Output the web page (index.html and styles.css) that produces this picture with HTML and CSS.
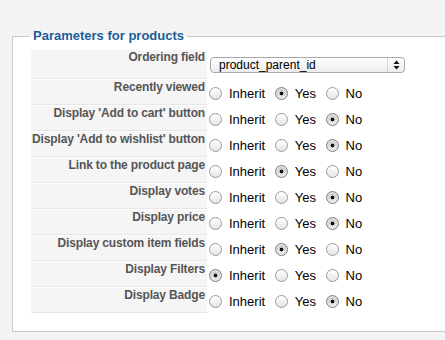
FILE: index.html
```html
<!DOCTYPE html>
<html lang="en">
<head>
  <meta charset="UTF-8">
  <title>Parameters for products</title>
  <link rel="stylesheet" href="styles.css">
</head>
<body>

  <fieldset class="adminform">
    <legend>Parameters for products</legend>
    <table class="paramlist">
      <tr>
        <td class="paramlist_key">Ordering field</td>
        <td class="paramlist_value first">
          <div class="select">
            <span class="select-text">product_parent_id</span>
            <span class="select-arrows">
              <svg width="7" height="10" viewBox="0 0 7 10">
                <path d="M3.5 0.5 L6.5 4 L0.5 4 Z" fill="#111"/>
                <path d="M3.5 9.5 L6.5 6 L0.5 6 Z" fill="#111"/>
              </svg>
            </span>
          </div>
        </td>
      </tr>
      <tr>
        <td class="paramlist_key">Recently viewed</td>
        <td class="paramlist_value">
          <input type="radio" name="p1"><label>Inherit</label>
          <input type="radio" name="p1" checked><label>Yes</label>
          <input type="radio" name="p1"><label>No</label>
        </td>
      </tr>
      <tr>
        <td class="paramlist_key">Display 'Add to cart' button</td>
        <td class="paramlist_value">
          <input type="radio" name="p2"><label>Inherit</label>
          <input type="radio" name="p2"><label>Yes</label>
          <input type="radio" name="p2" checked><label>No</label>
        </td>
      </tr>
      <tr>
        <td class="paramlist_key">Display 'Add to wishlist' button</td>
        <td class="paramlist_value">
          <input type="radio" name="p3"><label>Inherit</label>
          <input type="radio" name="p3"><label>Yes</label>
          <input type="radio" name="p3" checked><label>No</label>
        </td>
      </tr>
      <tr>
        <td class="paramlist_key">Link to the product page</td>
        <td class="paramlist_value">
          <input type="radio" name="p4"><label>Inherit</label>
          <input type="radio" name="p4" checked><label>Yes</label>
          <input type="radio" name="p4"><label>No</label>
        </td>
      </tr>
      <tr>
        <td class="paramlist_key">Display votes</td>
        <td class="paramlist_value">
          <input type="radio" name="p5"><label>Inherit</label>
          <input type="radio" name="p5"><label>Yes</label>
          <input type="radio" name="p5" checked><label>No</label>
        </td>
      </tr>
      <tr>
        <td class="paramlist_key">Display price</td>
        <td class="paramlist_value">
          <input type="radio" name="p6"><label>Inherit</label>
          <input type="radio" name="p6"><label>Yes</label>
          <input type="radio" name="p6" checked><label>No</label>
        </td>
      </tr>
      <tr>
        <td class="paramlist_key">Display custom item fields</td>
        <td class="paramlist_value">
          <input type="radio" name="p7"><label>Inherit</label>
          <input type="radio" name="p7" checked><label>Yes</label>
          <input type="radio" name="p7"><label>No</label>
        </td>
      </tr>
      <tr>
        <td class="paramlist_key">Display Filters</td>
        <td class="paramlist_value">
          <input type="radio" name="p8" checked><label>Inherit</label>
          <input type="radio" name="p8"><label>Yes</label>
          <input type="radio" name="p8"><label>No</label>
        </td>
      </tr>
      <tr>
        <td class="paramlist_key">Display Badge</td>
        <td class="paramlist_value">
          <input type="radio" name="p9"><label>Inherit</label>
          <input type="radio" name="p9"><label>Yes</label>
          <input type="radio" name="p9" checked><label>No</label>
        </td>
      </tr>
    </table>
  </fieldset>

</body>
</html>
```

FILE: styles.css
```css
* {
  box-sizing: border-box;
}

body {
  margin: 0;
  font-family: 'Liberation Sans', Arial, sans-serif;
  background-color: #f3f3f3;
  overflow: hidden;
}

.adminform {
  margin: 28px 0 0 12px;
  width: 433px;
  padding: 5px 0 17px 17px;
  border: 1px solid #cccccc;
  border-right: none;
  background-color: #ffffff;
}

.adminform legend {
  padding: 0 3px;
  font-size: 13px;
  line-height: 16px;
  font-weight: bold;
  color: #1c5c98;
}

.paramlist {
  border-collapse: separate;
  border-spacing: 1px;
}

.paramlist td {
  padding: 0;
}

.paramlist_key {
  width: 176px;
  padding: 0 2px 0 0 !important;
  background-color: #f5f5f5;
  border-bottom: 1px solid #e6e6e6;
  text-align: right;
  vertical-align: top;
  font-size: 12px;
  line-height: 15px;
  font-weight: bold;
  letter-spacing: -0.15px;
  color: #555555;
  white-space: nowrap;
}

.paramlist_value {
  padding: 5px 0 3px 0 !important;
  vertical-align: top;
  font-size: 13px;
  line-height: 17px;
  color: #000;
  white-space: nowrap;
}

.paramlist_value.first {
  padding: 7px 0 6px 0 !important;
}

.paramlist_value label {
  margin-right: 5px;
}

input[type="radio"] {
  appearance: none;
  -webkit-appearance: none;
  width: 13px;
  height: 13px;
  margin: 0 7px 0 1px;
  vertical-align: -2px;
  border: 1px solid #9a9a9a;
  border-radius: 50%;
  background: linear-gradient(#ffffff, #e4e4e4);
  box-shadow: inset 0 1px 1px rgba(255, 255, 255, 0.8);
}

input[type="radio"]:checked {
  border-color: #7d7d7d;
  background:
    radial-gradient(circle, #111 0 1.6px, transparent 2.2px),
    linear-gradient(#c4c4c4, #eeeeee);
}

.select {
  display: flex;
  width: 195px;
  height: 16px;
  margin-left: 2px;
  border: 1px solid #a8a8a8;
  border-radius: 4px;
  background: linear-gradient(#ffffff, #ececec);
  font-size: 12px;
  line-height: 14px;
}

.select-text {
  flex: 1;
  padding-left: 8px;
}

.select-arrows {
  width: 17px;
  display: flex;
  align-items: center;
  justify-content: center;
  border-left: 1px solid #d4d4d4;
}
```
